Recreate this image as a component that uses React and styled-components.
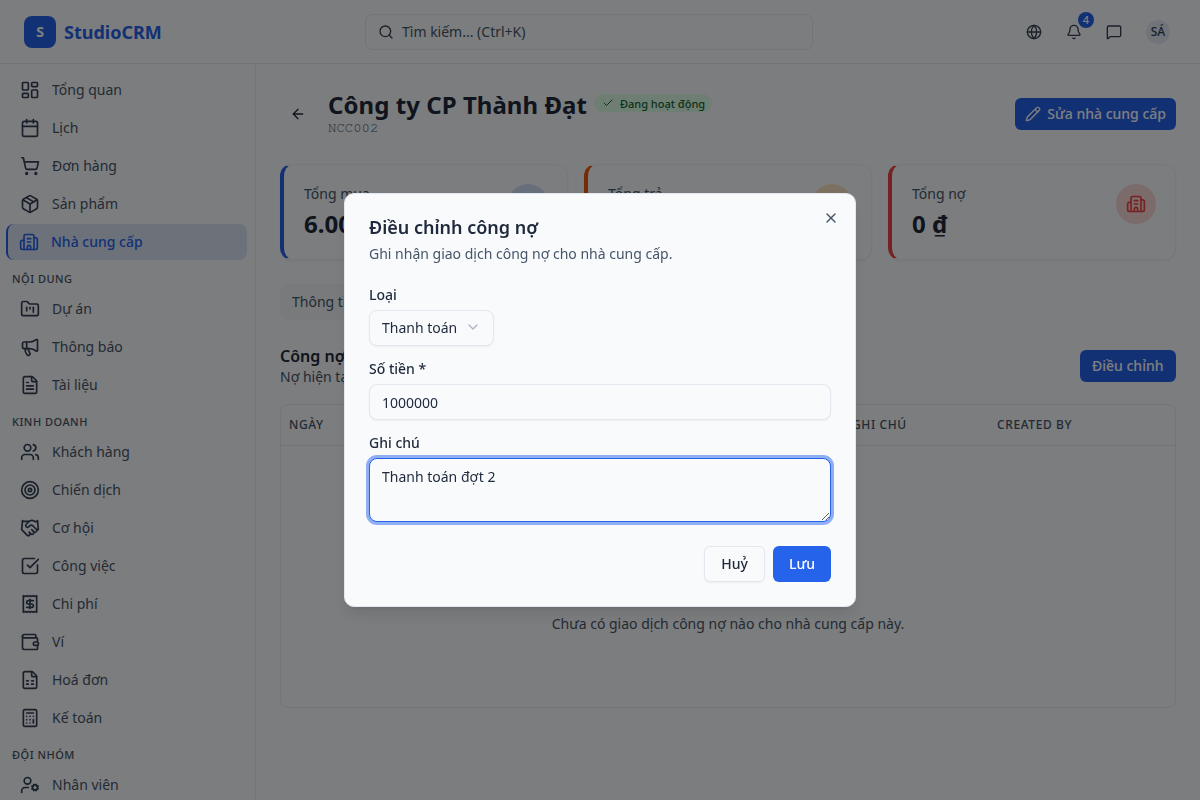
import React from "react";
import styled, { createGlobalStyle } from "styled-components";
import {
  ArrowLeft,
  Bell,
  Building2,
  Calculator,
  Calendar,
  Check,
  ChevronDown,
  FileSpreadsheet,
  FileText,
  FolderKanban,
  Globe,
  Handshake,
  LayoutDashboard,
  Megaphone,
  MessageSquare,
  Package,
  Pencil,
  Receipt,
  Search,
  ShoppingCart,
  SquareCheckBig,
  Target,
  UserCog,
  Users,
  Wallet,
  X,
} from "lucide-react";

const navGroups = [
  {
    items: [
      { label: "Tổng quan", icon: LayoutDashboard },
      { label: "Lịch", icon: Calendar },
      { label: "Đơn hàng", icon: ShoppingCart },
      { label: "Sản phẩm", icon: Package },
      { label: "Nhà cung cấp", icon: Building2, active: true },
    ],
  },
  {
    title: "Nội dung",
    items: [
      { label: "Dự án", icon: FolderKanban },
      { label: "Thông báo", icon: Megaphone },
      { label: "Tài liệu", icon: FileText },
    ],
  },
  {
    title: "Kinh doanh",
    items: [
      { label: "Khách hàng", icon: Users },
      { label: "Chiến dịch", icon: Target },
      { label: "Cơ hội", icon: Handshake },
      { label: "Công việc", icon: SquareCheckBig },
      { label: "Chi phí", icon: Receipt },
      { label: "Ví", icon: Wallet },
      { label: "Hoá đơn", icon: FileSpreadsheet },
      { label: "Kế toán", icon: Calculator },
    ],
  },
  {
    title: "Đội nhóm",
    items: [{ label: "Nhân viên", icon: UserCog }],
  },
];

const stats = [
  { label: "Tổng mua", value: "6.000.000 ₫", color: "#2563eb", tint: "#cedcf9" },
  { label: "Tổng trả", value: "6.000.000 ₫", color: "#ea580c", tint: "#f8e1c0" },
  { label: "Tổng nợ", value: "0 ₫", color: "#ef4444", tint: "#f6d6d7" },
];

const columns = ["Ngày", "Loại", "Số tiền", "Ghi chú", "Created by"];

const App = () => {
  return (
    <>
      <GlobalStyle />
      <Shell>
        <Header>
          <Brand>
            <LogoMark>S</LogoMark>
            <BrandName>StudioCRM</BrandName>
          </Brand>
          <SearchBox>
            <Search size={16} strokeWidth={2} />
            <span>Tìm kiếm... (Ctrl+K)</span>
          </SearchBox>
          <HeaderActions>
            <IconButton>
              <Globe size={16} />
            </IconButton>
            <IconButton>
              <Bell size={16} />
              <CountBadge>4</CountBadge>
            </IconButton>
            <IconButton>
              <MessageSquare size={16} />
            </IconButton>
            <Avatar>SÁ</Avatar>
          </HeaderActions>
        </Header>
        <Body>
          <Sidebar>
            {navGroups.map((group, i) => (
              <NavGroup key={i}>
                {group.title && <NavTitle>{group.title}</NavTitle>}
                {group.items.map((item) => {
                  const Icon = item.icon;
                  return (
                    <NavItem key={item.label} $active={item.active}>
                      <Icon size={20} />
                      {item.label}
                    </NavItem>
                  );
                })}
              </NavGroup>
            ))}
          </Sidebar>
          <Main>
            <PageHead>
              <BackButton>
                <ArrowLeft size={16} />
              </BackButton>
              <TitleBlock>
                <TitleRow>
                  <PageTitle>Công ty CP Thành Đạt</PageTitle>
                  <StatusBadge>
                    <Check size={12} />
                    Đang hoạt động
                  </StatusBadge>
                </TitleRow>
                <Code>NCC002</Code>
              </TitleBlock>
              <PrimaryButton>
                <Pencil size={16} />
                Sửa nhà cung cấp
              </PrimaryButton>
            </PageHead>

            <StatGrid>
              {stats.map((s) => (
                <StatCard key={s.label} $color={s.color}>
                  <div>
                    <StatLabel>{s.label}</StatLabel>
                    <StatValue>{s.value}</StatValue>
                  </div>
                  <StatIcon $color={s.color} $tint={s.tint}>
                    <Building2 size={20} />
                  </StatIcon>
                </StatCard>
              ))}
            </StatGrid>

            <TabList>
              <Tab>Thông tin</Tab>
              <Tab>Công nợ</Tab>
            </TabList>

            <SectionHead>
              <div>
                <SectionTitle>Công nợ</SectionTitle>
                <SectionNote>Nợ hiện tại: 0 ₫</SectionNote>
              </div>
              <PrimaryButton $wide>Điều chỉnh</PrimaryButton>
            </SectionHead>

            <TableCard>
              <TableHead>
                {columns.map((c) => (
                  <HeadCell key={c}>{c}</HeadCell>
                ))}
              </TableHead>
              <EmptyRow>Chưa có giao dịch công nợ nào cho nhà cung cấp này.</EmptyRow>
            </TableCard>
          </Main>
        </Body>

        <Overlay>
          <Dialog>
            <CloseButton>
              <X size={16} />
            </CloseButton>
            <DialogTitle>Điều chỉnh công nợ</DialogTitle>
            <DialogText>Ghi nhận giao dịch công nợ cho nhà cung cấp.</DialogText>
            <Form>
              <Field>
                <FieldLabel>Loại</FieldLabel>
                <SelectBox>
                  Thanh toán
                  <ChevronDown size={16} />
                </SelectBox>
              </Field>
              <Field>
                <FieldLabel>Số tiền *</FieldLabel>
                <TextInput defaultValue="1000000" />
              </Field>
              <Field>
                <FieldLabel>Ghi chú</FieldLabel>
                <NoteArea defaultValue="Thanh toán đợt 2" />
              </Field>
            </Form>
            <DialogFooter>
              <OutlineButton>Huỷ</OutlineButton>
              <SaveButton>Lưu</SaveButton>
            </DialogFooter>
          </Dialog>
        </Overlay>
      </Shell>
    </>
  );
};

export default App;

const GlobalStyle = createGlobalStyle`
  * {
    box-sizing: border-box;
  }
  html, body {
    margin: 0;
    height: 100%;
    overflow: hidden;
  }
  body {
    background: #f8fafc;
    color: #1e293b;
    font-family: "Noto Sans", sans-serif;
    font-size: 14px;
  }
`;

const Shell = styled.div`
  display: flex;
  flex-direction: column;
  height: 100vh;
  overflow: hidden;
`;

const Header = styled.header`
  display: grid;
  grid-template-columns: 341px 448px 1fr;
  align-items: center;
  flex: 0 0 64px;
  padding: 0 24px;
  background: #f8fafc;
  border-bottom: 1px solid #e2e8f0;
`;

const Brand = styled.div`
  display: flex;
  align-items: center;
  gap: 8px;
`;

const LogoMark = styled.div`
  display: flex;
  align-items: center;
  justify-content: center;
  width: 32px;
  height: 32px;
  border-radius: 8px;
  background: #2563eb;
  color: #fff;
  font-size: 14px;
  font-weight: 700;
`;

const BrandName = styled.span`
  color: #2563eb;
  font-size: 18px;
  font-weight: 700;
`;

const SearchBox = styled.div`
  display: flex;
  align-items: center;
  gap: 8px;
  height: 36px;
  padding: 0 12px;
  border: 1px solid #e2e8f0;
  border-radius: 8px;
  color: #475569;
  svg {
    color: #334155;
  }
`;

const HeaderActions = styled.div`
  display: flex;
  align-items: center;
  justify-content: flex-end;
  gap: 8px;
  margin-right: 6px;
`;

const IconButton = styled.div`
  position: relative;
  display: flex;
  align-items: center;
  justify-content: center;
  width: 32px;
  height: 32px;
  color: #334155;
`;

const CountBadge = styled.span`
  position: absolute;
  top: -4px;
  right: -4px;
  display: flex;
  align-items: center;
  justify-content: center;
  width: 16px;
  height: 16px;
  border-radius: 50%;
  background: #2563eb;
  color: #fff;
  font-size: 11px;
  font-weight: 500;
`;

const Avatar = styled.div`
  display: flex;
  align-items: center;
  justify-content: center;
  width: 24px;
  height: 24px;
  margin: 0 0 0 8px;
  border-radius: 50%;
  background: #e2e8f0;
  color: #334155;
  font-size: 12px;
  font-weight: 500;
`;

const Body = styled.div`
  display: flex;
  flex: 1;
  min-height: 0;
`;

const Sidebar = styled.aside`
  flex: 0 0 256px;
  padding: 8px 8px 0 0;
  border-right: 1px solid #e2e8f0;
  overflow: hidden;
`;

const NavGroup = styled.nav`
  display: flex;
  flex-direction: column;
  gap: 2px;
`;

const NavTitle = styled.div`
  margin: 11px 0 2px 12px;
  color: #475569;
  font-size: 11px;
  font-weight: 500;
  line-height: 16px;
  letter-spacing: 0.5px;
  text-transform: uppercase;
`;

const NavItem = styled.a`
  display: flex;
  align-items: center;
  gap: 12px;
  height: 36px;
  margin-left: ${(p) => (p.$active ? "6px" : "8px")};
  padding-left: ${(p) => (p.$active ? "11px" : "12px")};
  border-left: ${(p) => (p.$active ? "2px solid #2563eb" : "0")};
  border-radius: 8px;
  background: ${(p) => (p.$active ? "#dbe4f5" : "transparent")};
  color: ${(p) => (p.$active ? "#2563eb" : "#475569")};
  font-weight: ${(p) => (p.$active ? 500 : 400)};
  line-height: 20px;
  svg {
    color: ${(p) => (p.$active ? "#2563eb" : "#334155")};
  }
`;

const Main = styled.main`
  flex: 1;
  min-width: 0;
  padding: 25px 24px 0;
`;

const PageHead = styled.div`
  display: flex;
  align-items: center;
  gap: 12px;
  margin-bottom: 25px;
`;

const BackButton = styled.div`
  display: flex;
  align-items: center;
  justify-content: center;
  width: 36px;
  height: 32px;
  color: #1e293b;
`;

const TitleBlock = styled.div`
  flex: 1;
`;

const TitleRow = styled.div`
  display: flex;
  align-items: center;
  gap: 7px;
`;

const PageTitle = styled.h1`
  margin: 0;
  color: #1e293b;
  font-size: 24px;
  font-weight: 700;
  line-height: 32px;
  letter-spacing: 0.05px;
`;

const StatusBadge = styled.span`
  display: flex;
  align-items: center;
  gap: 6px;
  height: 18px;
  margin-bottom: 4px;
  padding: 0 7px 0 8px;
  border-radius: 9px;
  background: #dcfce7;
  color: #166534;
  font-size: 11px;
  font-weight: 500;
`;

const Code = styled.div`
  margin-bottom: 4px;
  color: #475569;
  font-family: "FreeMono", "Liberation Mono", monospace;
  font-size: 14px;
  line-height: 14px;
`;

const PrimaryButton = styled.div`
  display: flex;
  align-items: center;
  gap: 6px;
  height: 32px;
  padding: 0 ${(p) => (p.$wide ? "12.5px" : "10px")};
  border-radius: 6px;
  background: #2563eb;
  color: #fff;
  font-weight: 500;
  line-height: 20px;
  white-space: nowrap;
`;

const StatGrid = styled.div`
  display: grid;
  grid-template-columns: repeat(3, 1fr);
  gap: 16px;
  margin-bottom: 24px;
`;

const StatCard = styled.div`
  display: flex;
  align-items: flex-start;
  justify-content: space-between;
  height: 96px;
  padding: 19px 19px 0 20px;
  border: 1px solid #edf1f5;
  border-left: 4px solid ${(p) => p.$color};
  border-radius: 12px;
  background: #f8fafc;
  box-shadow: 0 1px 2px rgba(0, 0, 0, 0.05);
`;

const StatLabel = styled.div`
  color: #475569;
  line-height: 20px;
`;

const StatValue = styled.div`
  margin-top: 4px;
  color: #1e293b;
  font-size: 24px;
  font-weight: 700;
  line-height: 32px;
`;

const StatIcon = styled.div`
  display: flex;
  align-items: center;
  justify-content: center;
  width: 40px;
  height: 40px;
  border-radius: 50%;
  background: ${(p) => p.$tint};
  color: ${(p) => p.$color};
`;

const TabList = styled.div`
  display: flex;
  width: fit-content;
  height: 36px;
  padding: 0 4px 2px;
  border-radius: 8px;
  background: #f1f5f9;
  margin-bottom: 24px;
`;

const Tab = styled.div`
  display: flex;
  align-items: center;
  padding: 0 8px;
  color: #475569;
`;

const SectionHead = styled.div`
  display: flex;
  align-items: center;
  justify-content: space-between;
  margin-bottom: 16px;
`;

const SectionTitle = styled.h2`
  margin: 0;
  color: #1e293b;
  font-size: 16px;
  font-weight: 600;
  line-height: 24px;
`;

const SectionNote = styled.div`
  margin-bottom: 2px;
  color: #475569;
  line-height: 18px;
`;

const TableCard = styled.div`
  height: 304px;
  border: 1px solid #e2e8f0;
  border-radius: 8px;
  display: flex;
  flex-direction: column;
`;

const TableHead = styled.div`
  display: grid;
  grid-template-columns: 188px 188px 187px 145px 1fr;
  flex: 0 0 41px;
  align-items: center;
  padding-bottom: 2px;
  border-bottom: 1px solid #e2e8f0;
`;

const HeadCell = styled.div`
  padding-left: 8px;
  color: #475569;
  font-size: 12px;
  font-weight: 500;
  letter-spacing: 0.6px;
  text-transform: uppercase;
`;

const EmptyRow = styled.div`
  flex: 1;
  display: flex;
  align-items: flex-end;
  justify-content: center;
  padding-bottom: 74px;
  color: #475569;
`;

const Overlay = styled.div`
  position: fixed;
  inset: 0;
  display: flex;
  align-items: center;
  justify-content: center;
  background: rgba(0, 0, 0, 0.5);
`;

const Dialog = styled.div`
  position: relative;
  width: 512px;
  padding: 24px;
  border: 1px solid #e2e8f0;
  border-radius: 10px;
  background: #f8fafc;
  box-shadow: 0 10px 15px -3px rgba(0, 0, 0, 0.1), 0 4px 6px -4px rgba(0, 0, 0, 0.1);
`;

const CloseButton = styled.div`
  position: absolute;
  top: 16px;
  right: 16px;
  display: flex;
  color: #475569;
`;

const DialogTitle = styled.h2`
  margin: 0 0 8px;
  color: #1e293b;
  font-size: 18px;
  font-weight: 600;
  line-height: 18px;
`;

const DialogText = styled.p`
  margin: 0;
  color: #475569;
  line-height: 20px;
`;

const Form = styled.div`
  display: flex;
  flex-direction: column;
  gap: 14px;
  margin-top: 22px;
`;

const Field = styled.div`
  display: flex;
  flex-direction: column;
  align-items: flex-start;
  gap: 6px;
`;

const FieldLabel = styled.label`
  color: #1e293b;
  font-weight: 500;
  line-height: 18px;
`;

const SelectBox = styled.div`
  display: flex;
  align-items: center;
  gap: 8px;
  height: 36px;
  padding: 0 12px 2px;
  border: 1px solid #e2e8f0;
  border-radius: 8px;
  background: #f8fafc;
  box-shadow: 0 1px 2px rgba(0, 0, 0, 0.05);
  color: #1e293b;
  svg {
    opacity: 0.5;
    color: #64748b;
  }
`;

const TextInput = styled.input`
  width: 100%;
  height: 36px;
  padding: 0 12px;
  border: 1px solid #e2e8f0;
  border-radius: 8px;
  outline: none;
  background: #f8fafc;
  box-shadow: 0 1px 2px rgba(0, 0, 0, 0.05);
  color: #1e293b;
  font: inherit;
`;

const NoteArea = styled.textarea`
  display: block;
  width: 100%;
  height: 64px;
  padding: 8px 12px;
  border: 1px solid #2563eb;
  border-radius: 8px;
  outline: none;
  background: #f8fafc;
  box-shadow: 0 0 0 3px rgba(37, 99, 235, 0.5);
  color: #1e293b;
  font: inherit;
  line-height: 20px;
`;

const DialogFooter = styled.div`
  display: flex;
  justify-content: flex-end;
  gap: 8px;
  margin-top: 24px;
`;

const OutlineButton = styled.button`
  height: 36px;
  padding: 0 16px 2px;
  border: 1px solid #e2e8f0;
  border-radius: 6px;
  background: #f8fafc;
  box-shadow: 0 1px 2px rgba(0, 0, 0, 0.05);
  color: #1e293b;
  font: inherit;
  font-weight: 500;
`;

const SaveButton = styled.button`
  height: 36px;
  padding: 0 16px 2px;
  border: 0;
  border-radius: 6px;
  background: #2563eb;
  color: #fff;
  font: inherit;
  font-weight: 500;
`;
